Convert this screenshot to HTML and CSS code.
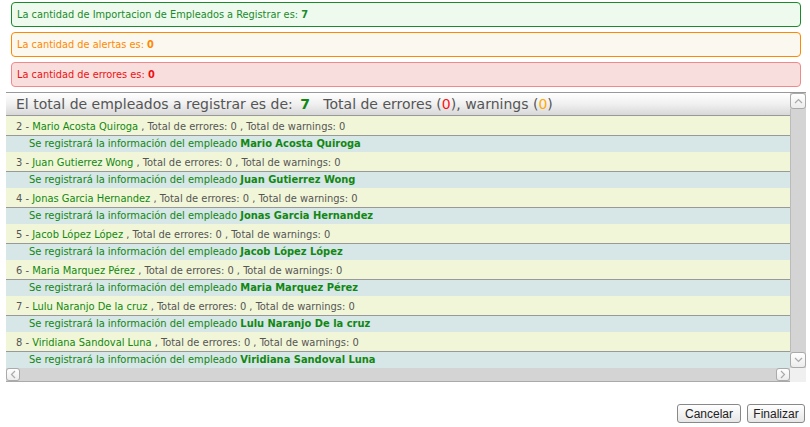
FILE: index.html
```html
<!DOCTYPE html>
<html lang="es">

<head>
    <meta charset="UTF-8">
    <meta name="viewport" content="width=device-width, initial-scale=1.0">
    <title>Importacion de Empleados</title>
    <link rel="stylesheet" href="styles.css">
</head>

<body>
    <div class="msg msg-ok">La cantidad de Importacion de Empleados a Registrar es: <b>7</b></div>
    <div class="msg msg-warn">La cantidad de alertas es: <b>0</b></div>
    <div class="msg msg-err">La cantidad de errores es: <b>0</b></div>

    <div class="panel">
        <div class="panel-body">
            <div class="viewport">
                <div class="panel-header">
                    El total de empleados a registrar es de: <b class="ok">7</b>&nbsp;&nbsp; Total de errores (<span class="err">0</span>), warnings (<span class="warn">0</span>)
                </div>
                <div class="rows">
                    <div class="row row-emp"><span>2 - </span><span class="ok">Mario Acosta Quiroga</span> , Total de errores: 0 , Total de warnings: 0</div>
                    <div class="row row-info">Se registrará la información del empleado <b>Mario Acosta Quiroga</b></div>
                    <div class="row row-emp"><span>3 - </span><span class="ok">Juan Gutierrez Wong</span> , Total de errores: 0 , Total de warnings: 0</div>
                    <div class="row row-info">Se registrará la información del empleado <b>Juan Gutierrez Wong</b></div>
                    <div class="row row-emp"><span>4 - </span><span class="ok">Jonas Garcia Hernandez</span> , Total de errores: 0 , Total de warnings: 0</div>
                    <div class="row row-info">Se registrará la información del empleado <b>Jonas Garcia Hernandez</b></div>
                    <div class="row row-emp"><span>5 - </span><span class="ok">Jacob López López</span> , Total de errores: 0 , Total de warnings: 0</div>
                    <div class="row row-info">Se registrará la información del empleado <b>Jacob López López</b></div>
                    <div class="row row-emp"><span>6 - </span><span class="ok">Maria Marquez Pérez</span> , Total de errores: 0 , Total de warnings: 0</div>
                    <div class="row row-info">Se registrará la información del empleado <b>Maria Marquez Pérez</b></div>
                    <div class="row row-emp"><span>7 - </span><span class="ok">Lulu Naranjo De la cruz</span> , Total de errores: 0 , Total de warnings: 0</div>
                    <div class="row row-info">Se registrará la información del empleado <b>Lulu Naranjo De la cruz</b></div>
                    <div class="row row-emp"><span>8 - </span><span class="ok">Viridiana Sandoval Luna</span> , Total de errores: 0 , Total de warnings: 0</div>
                    <div class="row row-info">Se registrará la información del empleado <b>Viridiana Sandoval Luna</b></div>
                </div>
            </div>
            <div class="vscroll">
                <div class="sb-btn sb-up">
                    <svg width="9" height="6" viewBox="0 0 9 6"><path d="M1 5 L4.5 1.5 L8 5" fill="none" stroke="#aaa" stroke-width="1.2"/></svg>
                </div>
                <div class="sb-track"></div>
                <div class="sb-btn sb-down">
                    <svg width="9" height="6" viewBox="0 0 9 6"><path d="M1 1 L4.5 4.5 L8 1" fill="none" stroke="#aaa" stroke-width="1.2"/></svg>
                </div>
            </div>
        </div>
        <div class="hscroll">
            <div class="hbar">
                <div class="sb-btn sb-left">
                    <svg width="6" height="9" viewBox="0 0 6 9"><path d="M5 1 L1.5 4.5 L5 8" fill="none" stroke="#aaa" stroke-width="1.2"/></svg>
                </div>
                <div class="sb-track"></div>
                <div class="sb-btn sb-right">
                    <svg width="6" height="9" viewBox="0 0 6 9"><path d="M1 1 L4.5 4.5 L1 8" fill="none" stroke="#aaa" stroke-width="1.2"/></svg>
                </div>
            </div>
            <div class="corner"></div>
        </div>
    </div>

    <div class="actions">
        <button class="btn btn-cancel">Cancelar</button>
        <button class="btn btn-finish">Finalizar</button>
    </div>
</body>

</html>
```

FILE: styles.css
```css
body {
    margin: 0;
    padding: 2px 4px 0 6px;
    font-family: "DejaVu Sans Condensed", "DejaVu Sans", sans-serif;
    font-stretch: condensed;
    font-size: 11px;
    background-color: #fff;
    color: #555;
}

/* Message boxes */
.msg {
    margin: 0 5px 5px 5px;
    height: 23px;
    line-height: 23px;
    padding-left: 5px;
    font-size: 10.9px;
    border: 1px solid;
    border-radius: 4px;
}

.msg-ok {
    background-color: #eefaee;
    border-color: #1a8a2a;
    color: #1a8a2a;
}

.msg-warn {
    background-color: #fbf8f0;
    border-color: #ff8800;
    color: #ff8800;
}

.msg-err {
    background-color: #f9dede;
    border-color: #f08a8a;
    color: #ee1111;
}

.ok {
    color: #118811;
}

.err {
    color: #ff1111;
}

.warn {
    color: #ffaa00;
}

/* Panel */
.panel {
    border-top: 1px solid #999;
}

.panel-body {
    display: flex;
    height: 275px;
}

.viewport {
    flex: 1;
    overflow: hidden;
}

.panel-header {
    height: 23px;
    line-height: 22px;
    padding-left: 10px;
    font-family: "DejaVu Sans", sans-serif;
    font-stretch: normal;
    font-size: 14px;
    color: #555;
    white-space: nowrap;
    background: linear-gradient(#ffffff, #f0f0f0 50%, #d8d8d8);
    border-bottom: 1px solid #999;
    box-sizing: border-box;
}

.panel-header b {
    margin-left: 3px;
}

.row {
    white-space: nowrap;
    box-sizing: border-box;
}

.row-emp {
    height: 20px;
    line-height: 21px;
    padding-left: 10px;
    background-color: #f2f6d8;
    border-bottom: 1px solid #999;
}

.row-info {
    height: 16px;
    line-height: 16px;
    padding-left: 23px;
    background-color: #d7e6e6;
    color: #118811;
}

/* Scrollbars */
.vscroll {
    width: 16px;
    display: flex;
    flex-direction: column;
    background-color: #d4d4d4;
}

.vscroll .sb-track {
    flex: 1;
    border-left: 1px solid #bbb;
}

.sb-btn {
    box-sizing: border-box;
    display: flex;
    align-items: center;
    justify-content: center;
    background: linear-gradient(#ffffff, #ececec);
    border: 1px solid #aaa;
    border-radius: 3px;
}

.sb-up,
.sb-down {
    height: 16px;
}

.hscroll {
    display: flex;
    height: 14px;
}

.hbar {
    flex: 1;
    display: flex;
    background-color: #d4d4d4;
    border-bottom: 1px solid #aaa;
}

.hbar .sb-track {
    flex: 1;
}

.sb-left,
.sb-right {
    width: 14px;
}

.corner {
    width: 16px;
    background-color: #f0f0f0;
}

/* Buttons */
.actions {
    display: flex;
    justify-content: flex-end;
    gap: 6px;
    margin-top: 22px;
    padding-right: 1px;
}

.btn {
    height: 19px;
    padding: 0;
    font-family: "Liberation Sans", Arial, sans-serif;
    font-size: 12px;
    color: #222;
    background: linear-gradient(#ffffff, #e6e6e6);
    border: 1px solid #888;
    border-radius: 3px;
}

.btn-cancel {
    width: 64px;
}

.btn-finish {
    width: 58px;
}
```
